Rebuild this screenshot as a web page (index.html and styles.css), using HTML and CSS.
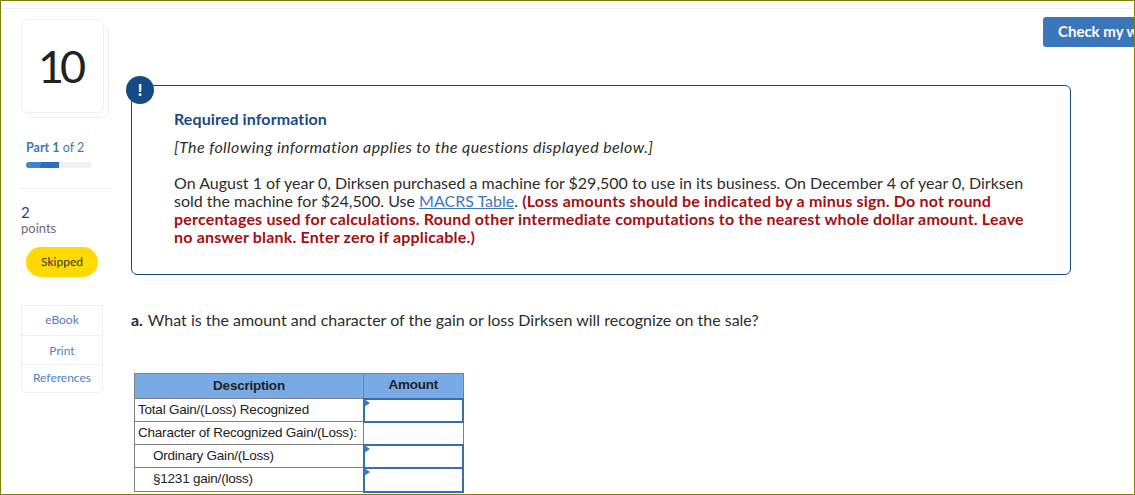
FILE: index.html

```html
<!DOCTYPE html>
<html lang="en">
<head>
<meta charset="UTF-8">
<title>Required information</title>
<link rel="stylesheet" href="styles.css">
</head>
<body>
<div class="frame">
  <div class="topline"></div>
  <div class="page">
    <aside class="side">
      <div class="num-card"><div class="num">10</div></div>

      <div class="part"><b>Part 1</b> of 2</div>
      <div class="progress"><div class="progress-fill"></div></div>

      <div class="points">
        <div class="points-val">2</div>
        <div class="points-label">points</div>
      </div>
      <div class="skipped">Skipped</div>

      <div class="tools">
        <div class="tool tool-ebook">eBook</div>
        <div class="tool tool-print">Print</div>
        <div class="tool tool-refs">References</div>
      </div>
    </aside>

    <main class="main">
      <div class="top-row"><button class="check-btn">Check my work</button></div>

      <section class="alert">
        <div class="alert-icon">!</div>
        <h2 class="alert-title">Required information</h2>
        <p class="alert-note">[The following information applies to the questions displayed below.]</p>
        <p class="alert-text">On August 1 of year 0, Dirksen purchased a machine for $29,500 to use in its business. On December 4 of year 0, Dirksen sold the machine for $24,500. Use <a href="#">MACRS Table</a>. <strong>(Loss amounts should be indicated by a minus sign. Do not round percentages used for calculations. Round other intermediate computations to the nearest whole dollar amount. Leave no answer blank. Enter zero if applicable.)</strong></p>
      </section>

      <p class="question"><b>a.</b> What is the amount and character of the gain or loss Dirksen will recognize on the sale?</p>

      <table class="answers">
        <tr class="head-row">
          <th class="col-desc">Description</th>
          <th class="col-amt">Amount</th>
        </tr>
        <tr>
          <td>Total Gain/(Loss) Recognized</td>
          <td class="entry"></td>
        </tr>
        <tr>
          <td>Character of Recognized Gain/(Loss):</td>
          <td></td>
        </tr>
        <tr>
          <td class="indent">Ordinary Gain/(Loss)</td>
          <td class="entry"></td>
        </tr>
        <tr class="last-row">
          <td class="indent">§1231 gain/(loss)</td>
          <td class="entry"></td>
        </tr>
      </table>
    </main>
  </div>
</div>
</body>
</html>
```

FILE: styles.css

```css
* {
  box-sizing: border-box;
}

html, body {
  margin: 0;
  height: 100%;
  overflow: hidden;
  background: #fff;
}

body {
  font-family: Lato, "Open Sans", sans-serif;
  color: #2d2d2d;
}

.frame {
  height: 495px;
  border: 1px solid #808000;
  overflow: hidden;
  position: relative;
}

.topline {
  height: 8px;
  border-bottom: 1px solid #eee;
}

.page {
  display: flex;
}

/* left column */
.side {
  width: 130px;
  flex-shrink: 0;
  padding: 10px 0 0 20px;
}

.num-card {
  width: 83px;
  height: 94px;
  border: 1px solid #eee;
  border-radius: 7px;
  background: #fff;
  box-shadow: 5px 5px 0 -1px #fff, 5px 5px 0 0 #eee;
  display: flex;
  align-items: center;
  justify-content: center;
}

.num {
  font-size: 45px;
  color: #222;
  margin-right: 5px;
  letter-spacing: -4px;
}

.part {
  margin: 27px 0 0 5px;
  font-size: 12.5px;
  line-height: 16px;
  color: #3b78bd;
}

.progress {
  width: 66px;
  height: 6px;
  margin: 6px 0 0 5px;
  background: #f1f1f1;
  border-radius: 3px;
  overflow: hidden;
}

.progress-fill {
  width: 33px;
  height: 100%;
  background: linear-gradient(115deg, #3f86d0 45%, #2a72b8 45%);
}

.points {
  margin-top: 20px;
  width: 90px;
  border-top: 1px solid #eee;
  padding-top: 15px;
}

.points-val {
  font-size: 15px;
  line-height: 16px;
  color: #1a4a85;
}

.points-label {
  font-size: 13px;
  line-height: 17px;
  color: #6b6b7b;
}

.skipped {
  width: 72px;
  height: 30px;
  margin: 10px 0 0 5px;
  border-radius: 15px;
  background: #ffd900;
  font-size: 12px;
  line-height: 30px;
  text-align: center;
  color: #333;
}

.tools {
  width: 82px;
  margin-top: 28px;
  border: 1px solid #eee;
  border-radius: 0 0 6px 6px;
  font-size: 12px;
  text-align: center;
  color: #4f7fc4;
}

.tool + .tool {
  border-top: 1px solid #eee;
}

.tool-ebook {
  height: 29px;
  line-height: 28px;
}

.tool-print {
  height: 29px;
  line-height: 29px;
}

.tool-refs {
  height: 28px;
  line-height: 26px;
}

/* main column */
.main {
  width: 940px;
  flex-shrink: 0;
}

.top-row {
  display: flex;
  padding: 8px 0 0 912px;
  height: 76px;
}

.check-btn {
  flex-shrink: 0;
  width: 110px;
  height: 30px;
  border: none;
  border-radius: 3px;
  background: #3b76ba;
  color: #fff;
  font-family: inherit;
  font-size: 15px;
  font-weight: 700;
  text-align: left;
  padding: 0 0 2px 15px;
  white-space: nowrap;
}

.alert {
  position: relative;
  height: 190px;
  border: 1px solid #1a4a85;
  border-radius: 6px;
  padding: 23px 42px 0;
}

.alert-icon {
  position: absolute;
  top: -10px;
  left: -6px;
  width: 28px;
  height: 28px;
  border-radius: 50%;
  background: #164a84;
  color: #fff;
  font-size: 16px;
  font-weight: 900;
  line-height: 28px;
  text-align: center;
}

.alert-title {
  margin: 0;
  font-size: 16px;
  line-height: 20px;
  font-weight: 700;
  letter-spacing: 0.1px;
  color: #1a4a85;
}

.alert-note {
  margin: 8px 0 0;
  font-size: 16px;
  line-height: 20px;
  font-style: italic;
  letter-spacing: 0.4px;
}

.alert-text {
  margin: 17px 0 0;
  font-size: 16px;
  line-height: 18px;
}

.alert-text a {
  color: #3b78bd;
}

.alert-text strong {
  color: #a50f14;
  letter-spacing: 0.18px;
}

.question {
  margin: 35px 0 0;
  font-size: 16px;
  line-height: 20px;
}

.question b {
  margin-right: 1px;
}

/* answer table */
.answers {
  margin: 43px 0 0 3px;
  width: 330px;
  border-collapse: collapse;
  table-layout: fixed;
  font-family: "Liberation Sans", Arial, sans-serif;
  font-size: 13.5px;
  letter-spacing: -0.22px;
  color: #222;
}

.answers th, .answers td {
  border: 1px solid #808080;
  height: 23px;
  padding: 0 3px 2px;
  white-space: nowrap;
}

.head-row th {
  height: 25px;
  background: #78abe6;
  text-align: center;
}

.col-desc {
  width: 229px;
}

.last-row td {
  height: 24px;
}

.answers .indent {
  padding-left: 18px;
}

.answers .entry {
  position: relative;
  border: 2px solid #3a6ea8;
}

.entry::before {
  content: "";
  position: absolute;
  top: -1px;
  left: -1px;
  border-left: 6px solid #3a78c0;
  border-top: 4px solid transparent;
  border-bottom: 4px solid transparent;
}
```
